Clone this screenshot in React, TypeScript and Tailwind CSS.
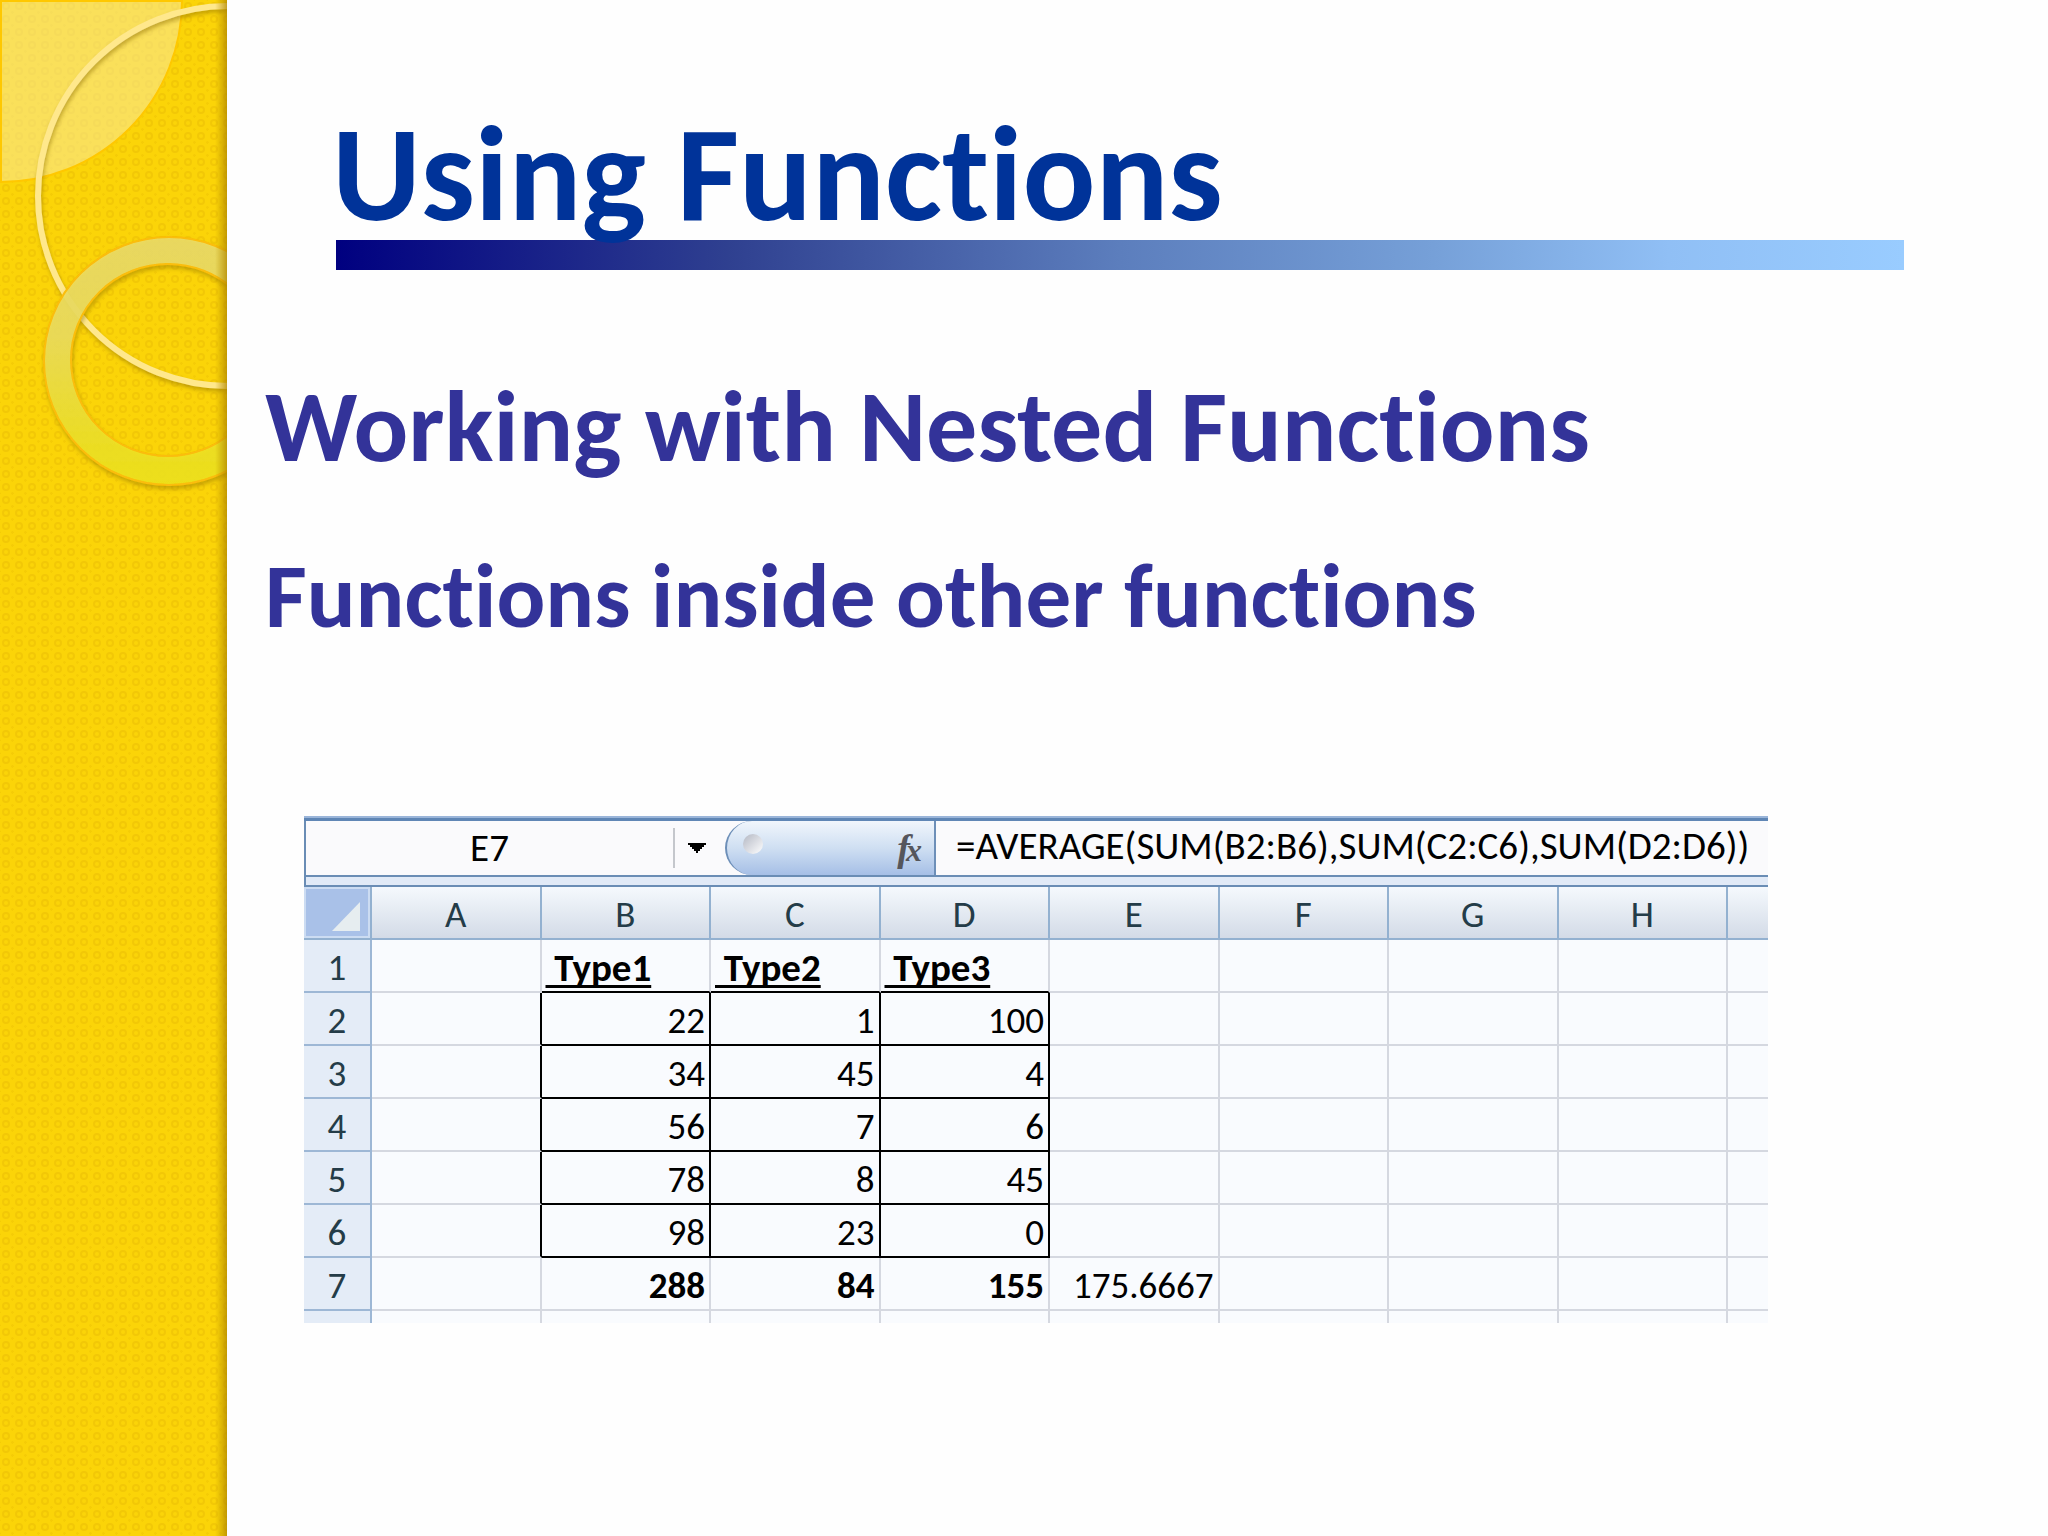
import React from "react";

const columns = ["A", "B", "C", "D", "E", "F", "G", "H"];

const rows: string[][] = [
  ["", "Type1", "Type2", "Type3", "", "", "", ""],
  ["", "22", "1", "100", "", "", "", ""],
  ["", "34", "45", "4", "", "", "", ""],
  ["", "56", "7", "6", "", "", "", ""],
  ["", "78", "8", "45", "", "", "", ""],
  ["", "98", "23", "0", "", "", "", ""],
  ["", "288", "84", "155", "175.6667", "", "", ""],
];

const SideArt = () => (
  <svg className="block h-full w-full" aria-hidden="true">
    <defs>
      <pattern id="dots" width="13" height="13" patternUnits="userSpaceOnUse">
        <rect width="13" height="13" fill="#fbd408" />
        <circle cx="6" cy="6" r="3" fill="none" stroke="#f2c806" strokeWidth="2" />
        <path d="M11 12.5h3M-1 12.5h2M12.5 11v3M12.5 -1v2" stroke="#f5cc06" strokeWidth="1.5" />
      </pattern>
      <linearGradient id="donut" x1="0" y1="0" x2="0" y2="1">
        <stop offset="0" stopColor="#ebdc69" />
        <stop offset="0.4" stopColor="#ecde5e" />
        <stop offset="0.8" stopColor="#eee22a" />
        <stop offset="1" stopColor="#f0e51a" />
      </linearGradient>
      <linearGradient id="edge">
        <stop offset="0" stopColor="#b88f00" stopOpacity="0" />
        <stop offset="1" stopColor="#b08600" stopOpacity="0.75" />
      </linearGradient>
      <filter id="drop" x="-10%" y="-10%" width="120%" height="120%">
        <feDropShadow dx="1" dy="3" stdDeviation="2" floodColor="#8a6a00" floodOpacity="0.5" />
      </filter>
    </defs>
    <rect width="100%" height="100%" fill="url(#dots)" />
    <path d="M1 1H182A181 181 0 0 1 1 182Z" fill="#f9e78c" fillOpacity="0.62" stroke="#ffc800" strokeWidth="2" />
    <circle cx="228" cy="196" r="190" fill="none" stroke="#ffe88c" strokeWidth="6" filter="url(#drop)" />
    <g filter="url(#drop)">
      <path
        fillRule="evenodd"
        d="M44 361a125 124 0 1 0 250 0a125 124 0 1 0 -250 0ZM71 360a97 96 0 1 0 194 0a97 96 0 1 0 -194 0Z"
        fill="url(#donut)"
        fillOpacity="0.88"
        stroke="#fbbd08"
        strokeWidth="2"
      />
    </g>
    <rect x="215" width="12" height="100%" fill="url(#edge)" />
  </svg>
);

const FormulaBar = () => (
  <div className="flex h-[54px] items-stretch bg-[#fafafc]">
    <input
      aria-label="Name box"
      defaultValue="E7"
      className="w-[367px] min-w-0 bg-transparent text-center text-[39px] text-black outline-none"
    />
    <button aria-label="Open name list" className="flex w-[52px] items-center">
      <span className="h-10 w-[2px] bg-[#c4c7cc]" />
      <svg className="ml-3 h-3 w-5" viewBox="0 0 20 12" fill="#000">
        <path d="M1 1h18v2h-2v2h-2v2h-2v2h-2v2h-2v-2h-2v-2h-2v-2h-2v-2h-2z" />
      </svg>
    </button>
    <button
      aria-label="Insert function"
      className="flex w-[211px] items-center justify-between rounded-l-full border-l-2 border-r-2 border-[#6d8fb8] bg-linear-to-b from-[#f1f6fc] via-[#cfdff2] to-[#a6bfe6] pr-3 pl-4"
    >
      <span className="mb-2 h-5 w-5 rounded-full bg-linear-to-br from-[#b4b8c4] to-white" />
      <span className="flex items-baseline font-['Liberation_Serif',serif] text-[38px] leading-none italic text-[#55565c]">
        <span className="-mr-1 font-bold">f</span>
        <span className="text-[32px] font-bold">x</span>
      </span>
    </button>
    <input
      aria-label="Formula"
      defaultValue="=AVERAGE(SUM(B2:B6),SUM(C2:C6),SUM(D2:D6))"
      className="min-w-0 flex-1 bg-transparent pb-1 pl-5 text-[39px] text-black outline-none"
    />
  </div>
);

const cellClass = (value: string, row: number, col: number) => {
  const boxed = row >= 1 && row <= 5 && col >= 1 && col <= 3;
  const right = boxed || (row >= 1 && row <= 5 && col === 0) ? "border-r-black" : "border-r-[#d5d8e0]";
  const bottom = boxed || (row === 0 && col >= 1 && col <= 3) ? "border-b-black" : "border-b-[#d5d8e0]";
  const align = row === 0 ? "text-left pl-1 text-[39px]" : "text-right pr-1";
  const weight = row === 0 || (row === 6 && col < 4) ? "font-bold" : "font-normal";
  return `border-r-2 border-b-2 p-0 pt-1 ${right} ${bottom} ${align} ${weight}`;
};

const Sheet = () => (
  <table className="w-full table-fixed border-separate border-spacing-0 bg-[#f9fbfe] text-[37px] leading-none text-black">
    <colgroup>
      <col className="w-[68px]" />
      {columns.map((c) => (
        <col key={c} />
      ))}
      <col className="w-[40px]" />
    </colgroup>
    <thead>
      <tr className="h-[53px] text-[#243c48]">
        <th className="border-r-2 border-b-2 border-[#93b1d0] bg-[#a9c1e8] p-0" aria-label="Select all">
          <div className="flex h-[51px] items-end justify-end border-2 border-[#ccdcf2] pr-2 pb-1">
            <svg className="h-8 w-7" viewBox="0 0 28 32">
              <path d="M28 2V31H0Z" fill="#e6edf0" />
            </svg>
          </div>
        </th>
        {columns.map((c) => (
          <th
            key={c}
            className="border-r-2 border-b-2 border-[#93b1d0] bg-linear-to-b from-[#f5f9fd] to-[#d3dbe7] p-0 pt-1 font-normal"
          >
            {c}
          </th>
        ))}
        <th className="border-b-2 border-[#93b1d0] bg-linear-to-b from-[#f5f9fd] to-[#d3dbe7] p-0" />
      </tr>
    </thead>
    <tbody>
      {rows.map((cells, r) => (
        <tr key={r} className="h-[53px]">
          <th className="border-r-2 border-b-2 border-[#9db7d5] bg-[#e4ecf7] p-0 pt-1 font-normal text-[#243c48]">
            {r + 1}
          </th>
          {cells.map((value, c) => (
            <td key={c} className={cellClass(value, r, c)}>
              <span
                className={
                  r === 0 && value
                    ? "whitespace-pre underline decoration-3 underline-offset-4 [text-decoration-skip-ink:none]"
                    : ""
                }
              >
                {r === 0 && value ? " " + value : value}
              </span>
            </td>
          ))}
          <td className="border-b-2 border-[#d5d8e0] p-0" />
        </tr>
      ))}
      <tr className="h-3">
        <th className="border-r-2 border-[#9db7d5] bg-[#e4ecf7] p-0" />
        {columns.map((c) => (
          <td key={c} className="border-r-2 border-[#d5d8e0] p-0" />
        ))}
        <td className="p-0" />
      </tr>
    </tbody>
  </table>
);

const App = () => {
  return (
    <div className="flex min-h-screen bg-[#fefefe] font-[Carlito,Lato,sans-serif] [font-variant-ligatures:none]">
      <aside className="w-[227px] shrink-0">
        <SideArt />
      </aside>
      <main className="min-w-0 flex-1 pt-[94px]">
        <header className="mr-36 ml-[109px]">
          <h1 className="relative -mb-[14px] -ml-1 whitespace-nowrap text-[136px] leading-[160px] font-bold text-[#003399]">
            Using Functions
          </h1>
          <div className="h-[30px] bg-[linear-gradient(to_right,#000080,#2f4090_25%,#5c7ebd_50%,#76a0d8_70%,#90bff5_85%,#99ccff)]" />
        </header>
        <div className="ml-[38px] whitespace-nowrap font-bold text-[#333399]">
          <h2 className="mt-24 text-[102px] leading-[120px]">Working with Nested Functions</h2>
          <p className="mt-[60px] text-[91px] leading-[100px]">Functions inside other functions</p>
        </div>
        <section className="mt-[170px] mr-[280px] ml-[77px]">
          <div className="h-[2px] bg-[#9ab5d9]" />
          <div className="h-[3px] bg-[#5f86b5]" />
          <div className="border-l-2 border-[#6a8db5]">
            <FormulaBar />
            <div className="h-3 border-t-2 border-b-2 border-[#6a8db5] bg-[#e1eaf7]" />
          </div>
          <Sheet />
        </section>
      </main>
    </div>
  );
};

export default App;
